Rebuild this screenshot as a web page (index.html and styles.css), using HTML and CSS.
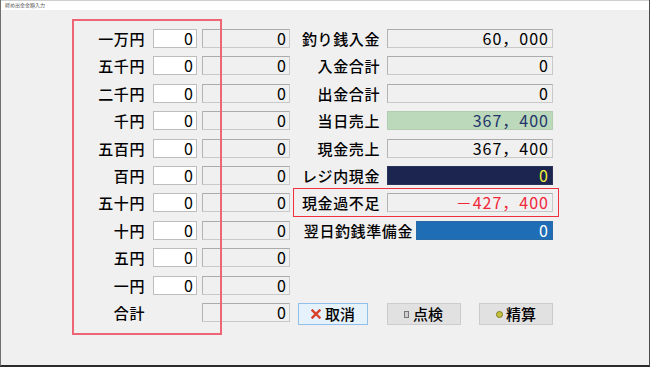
FILE: index.html
```html
<!DOCTYPE html>
<html lang="ja">
<head>
    <meta charset="UTF-8">
    <title>締め出金金額入力</title>
    <link rel="stylesheet" href="styles.css">
</head>
<body>
    <div class="window">
        <div class="titlebar">締め出金金額入力</div>

        <div class="client">
            <div class="denoms">
                <div class="mark mark-denoms"></div>
                <div class="row"><span class="label">一万円</span><span class="field input">0</span><span class="field">0</span></div>
                <div class="row"><span class="label">五千円</span><span class="field input">0</span><span class="field">0</span></div>
                <div class="row"><span class="label">二千円</span><span class="field input">0</span><span class="field">0</span></div>
                <div class="row"><span class="label">千円</span><span class="field input">0</span><span class="field">0</span></div>
                <div class="row"><span class="label">五百円</span><span class="field input">0</span><span class="field">0</span></div>
                <div class="row"><span class="label">百円</span><span class="field input">0</span><span class="field">0</span></div>
                <div class="row"><span class="label">五十円</span><span class="field input">0</span><span class="field">0</span></div>
                <div class="row"><span class="label">十円</span><span class="field input">0</span><span class="field">0</span></div>
                <div class="row"><span class="label">五円</span><span class="field input">0</span><span class="field">0</span></div>
                <div class="row"><span class="label">一円</span><span class="field input">0</span><span class="field">0</span></div>
                <div class="row"><span class="label">合計</span><span class="blank"></span><span class="field">0</span></div>
            </div>

            <div class="totals">
                <div class="row"><span class="label">釣り銭入金</span><span class="field">60，000</span></div>
                <div class="row"><span class="label">入金合計</span><span class="field">0</span></div>
                <div class="row"><span class="label">出金合計</span><span class="field">0</span></div>
                <div class="row"><span class="label">当日売上</span><span class="field field-green">367，400</span></div>
                <div class="row"><span class="label">現金売上</span><span class="field">367，400</span></div>
                <div class="row"><span class="label">レジ内現金</span><span class="field field-navy">0</span></div>
                <div class="row">
                    <div class="mark mark-shortage"></div>
                    <span class="label">現金過不足</span><span class="field field-red">－427，400</span>
                </div>
                <div class="row row-wide"><span class="label">翌日釣銭準備金</span><span class="field field-blue">0</span></div>

                <div class="buttons">
                    <button class="btn btn-focus">
                        <svg class="icon-x" width="10" height="10" viewBox="0 0 10 10"><path d="M1.5 1.5L8.5 8.5M8.5 1.5L1.5 8.5" stroke="#d9402c" stroke-width="2.4" stroke-linecap="square"/></svg>取消
                    </button>
                    <button class="btn"><span class="icon-chip"></span>点検</button>
                    <button class="btn"><span class="icon-dot"></span>精算</button>
                </div>
            </div>
        </div>
    </div>
</body>
</html>
```

FILE: styles.css
```css
body {
    margin: 0;
    padding: 0;
    background-color: #fff;
    font-family: "Noto Sans CJK JP", "Noto Sans", sans-serif;
    color: #000;
}

.window {
    width: 650px;
    height: 367px;
    box-sizing: border-box;
    border-left: 1px solid #6e6e6e;
    border-right: 1px solid #4c4c4c;
    border-bottom: 2px solid #2b2b2b;
    background-color: #f0f0f0;
    display: flex;
    flex-direction: column;
}

.titlebar {
    height: 10px;
    box-sizing: border-box;
    border-top: 1px solid #cfcfcf;
    background-color: #fff;
    font-size: 5px;
    line-height: 8px;
    padding-left: 4px;
    color: #555;
}

.client {
    flex: 1;
    display: flex;
    gap: 10px;
    padding: 19px 0 0 79px;
    align-items: flex-start;
}

.denoms,
.totals {
    position: relative;
    display: flex;
    flex-direction: column;
    height: 301.4px;
}

.row {
    position: relative;
    display: flex;
    height: 27.4px;
    flex-shrink: 0;
    align-items: flex-start;
}

.label {
    font-size: 15px;
    font-weight: 500;
    letter-spacing: 0.6px;
    line-height: 19px;
    text-align: right;
    white-space: nowrap;
}

.field {
    height: 19px;
    box-sizing: border-box;
    border: 1px solid #c9c9c9;
    border-top-color: #ababab;
    border-left-color: #b4b4b4;
    background-color: #f0f0f0;
    font-size: 16px;
    line-height: 17px;
    letter-spacing: 1px;
    text-align: right;
    padding-right: 2px;
    white-space: nowrap;
}

/* left: denomination rows */
.denoms .row {
    gap: 5px;
}

.denoms .label {
    width: 68px;
    box-sizing: border-box;
    padding-right: 3px;
}

.denoms .field {
    width: 88px;
}

.denoms .input {
    width: 44px;
    background-color: #fff;
    border-color: #bdbdbd;
}

.denoms .blank {
    width: 44px;
}

/* right: totals */
.totals {
    width: 253px;
}

.totals .label {
    flex: 1;
    margin-right: 7px;
}

.totals .field {
    width: 166px;
    padding-right: 3px;
}

.totals .row-wide .label {
    margin-right: 3px;
}

.totals .row-wide .field {
    width: 137px;
}

.field-green {
    background-color: #bcd9bb;
    border-color: #b3cdb1;
    color: #23356a;
}

.field-navy {
    background-color: #1c2550;
    border-color: #2c3358;
    color: #f0ec3c;
}

.field-red {
    color: #f0283a;
}

.field-blue {
    background-color: #1f6db5;
    border-color: #2a6aa6;
    color: #fff;
}

/* annotation frames drawn over the form */
.mark {
    position: absolute;
    z-index: 2;
    box-sizing: border-box;
    border: 2px solid #ee6676;
    pointer-events: none;
}

.mark-denoms {
    left: -8px;
    top: -10px;
    width: 150px;
    height: 316px;
}

.mark-shortage {
    left: -7px;
    right: -6px;
    top: -5px;
    height: 29px;
    border-width: 1.5px;
    border-color: #f0303f;
}

.buttons {
    margin-top: auto;
    margin-left: -2px;
    width: 255px;
    height: 27.4px;
    display: flex;
    justify-content: space-between;
    align-items: flex-start;
}

.btn {
    width: 74px;
    height: 22px;
    box-sizing: border-box;
    border: 1px solid #cccccc;
    background-color: #e1e1e1;
    font-family: "Noto Sans CJK JP", sans-serif;
    font-size: 15px;
    font-weight: 500;
    line-height: 18px;
    padding: 0;
    display: flex;
    align-items: center;
    justify-content: center;
    gap: 2px;
    color: #000;
}

.btn-focus {
    width: 70px;
    background-color: #e5f1fb;
    border-color: #92bfea;
}

.icon-x {
    margin-right: 2px;
}

.icon-chip {
    width: 3px;
    height: 5px;
    border: 1px solid #777;
    background-color: #cfcfcf;
    margin-right: 2px;
}

.icon-dot {
    width: 5px;
    height: 5px;
    border-radius: 50%;
    border: 1px solid #7e7a22;
    background-color: #c5c23c;
    margin-right: 1px;
}
```
